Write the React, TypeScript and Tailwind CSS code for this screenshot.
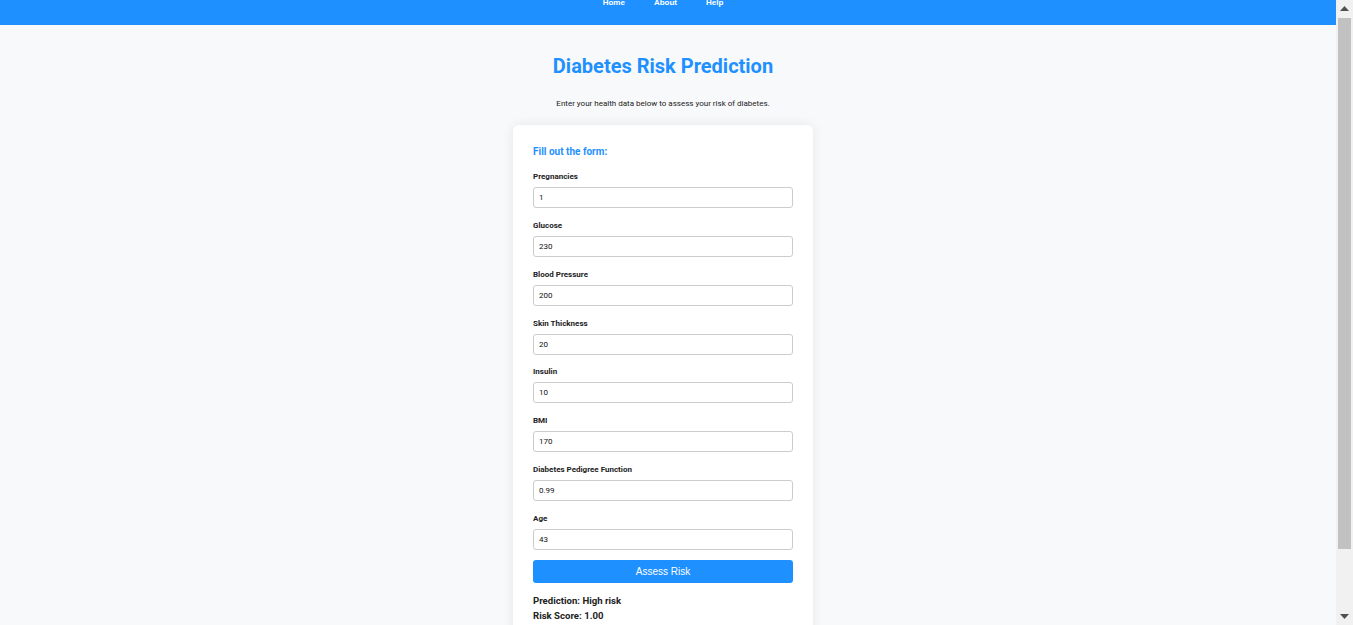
import React from 'react';

const fields: { label: string; value: string }[] = [
	{ label: 'Pregnancies', value: '1' },
	{ label: 'Glucose', value: '230' },
	{ label: 'Blood Pressure', value: '200' },
	{ label: 'Skin Thickness', value: '20' },
	{ label: 'Insulin', value: '10' },
	{ label: 'BMI', value: '170' },
	{ label: 'Diabetes Pedigree Function', value: '0.99' },
	{ label: 'Age', value: '43' },
];

// Classic browser scrollbar as seen on the right edge of the page
function FakeScrollbar()
{
	return (
		<div className="flex w-[17px] shrink-0 flex-col items-center bg-[#f1f1f1]">
			<div className="flex h-[17px] w-full items-center justify-center">
				<svg width="9" height="5" viewBox="0 0 9 5"><path d="M4.5 0L9 5H0z" fill="#505050" /></svg>
			</div>
			<div className="mt-[1px] h-[531px] w-[13px] bg-[#c1c1c1]" />
			<div className="flex-1" />
			<div className="flex h-[17px] w-full items-center justify-center">
				<svg width="9" height="5" viewBox="0 0 9 5"><path d="M0 0H9L4.5 5z" fill="#505050" /></svg>
			</div>
		</div>
	);
}

export default function App()
{
	return (
		<div className="flex h-screen overflow-hidden bg-[#f8f9fa] font-['Roboto',sans-serif] text-[#222]">
			<div className="min-w-0 flex-1 overflow-hidden">
				{/* Top navigation */}
				<header className="h-[25px] overflow-hidden bg-[#1e90ff]">
					<nav className="-mt-[3px] flex justify-center gap-[29px] pr-[10px] font-['Liberation_Sans',sans-serif] text-[8px] font-bold leading-[12px] text-white">
						<a href="#">Home</a>
						<a href="#">About</a>
						<a href="#">Help</a>
					</nav>
				</header>

				<main className="flex flex-col items-center pr-[10px] pb-[50px]">
					<h1 className="mt-[28px] text-[20px] font-bold leading-[26px] text-[#1e90ff]">
						Diabetes Risk Prediction
					</h1>
					<p className="mt-[19px] text-[8px] leading-[12px]">
						Enter your health data below to assess your risk of diabetes.
					</p>

					<form className="mt-[15px] w-[300px] rounded-[6px] bg-white p-[20px] shadow-[0_0_12px_rgba(0,0,0,0.08)]">
						<h2 className="mb-[13px] text-[10px] font-bold leading-[14px] text-[#1e90ff]">
							Fill out the form:
						</h2>

						{fields.map((f) => (
							<div key={f.label} className="mb-[12.85px]">
								<label className="mb-[5px] block text-[8px] font-bold leading-[10px]">{f.label}</label>
								<input
									type="text"
									defaultValue={f.value}
									className="block h-[21px] w-full rounded-[3px] border border-[#ccc] px-[5px] text-[8px] text-[#111] outline-none"
								/>
							</div>
						))}

						<button
							type="button"
							className="-mt-[3px] block h-[23px] w-full rounded-[3px] bg-[#1e90ff] font-['Liberation_Sans',sans-serif] text-[10px] text-white"
						>
							Assess Risk
						</button>

						<div className="mt-[10px] text-[9.6px] font-bold leading-[15px]">
							<p>Prediction: High risk</p>
							<p>Risk Score: 1.00</p>
						</div>
					</form>
				</main>
			</div>

			<FakeScrollbar />
		</div>
	);
}
